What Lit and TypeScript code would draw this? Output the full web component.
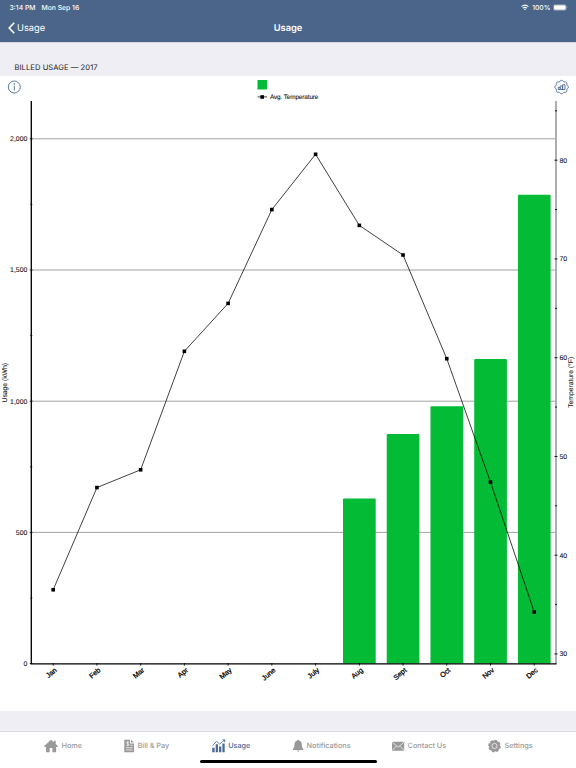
import { LitElement, html, svg, css } from "lit";
import { customElement, property } from "lit/decorators.js";

const MONTHS = ["Jan", "Feb", "Mar", "Apr", "May", "June", "July", "Aug", "Sept", "Oct", "Nov", "Dec"];
const USAGE = [0, 0, 0, 0, 0, 0, 0, 629, 875, 981, 1161, 1787];
const TEMPS = [36.5, 46.85, 48.65, 60.65, 65.5, 75, 80.6, 73.4, 70.4, 59.9, 47.4, 34.25];

// Chart coordinates are relative to the top of the white panel.
const BASE = 587.6;
const monthX = (i: number) => 53.2 + i * 43.73;
const usageY = (v: number) => BASE - v * 0.2624;
const tempY = (t: number) => 84.2 + (80 - t) * 9.875;

@customElement("usage-chart")
class UsageChart extends LitElement {
  static styles = css`
    :host { display: block; height: 635.5px; background: #fff; }
    svg { display: block; font-family: "Liberation Sans", Arial, sans-serif; text-rendering: geometricPrecision; }
    .axis { stroke: #000; stroke-width: 1.35; fill: none; }
    .right-axis { stroke: #aaa; stroke-width: 1.9; }
    .tick { stroke: #000; stroke-width: 0.9; }
    .grid { stroke: #8b8b8b; stroke-width: 0.8; }
    .bar { fill: #03bb35; }
    .line { fill: none; stroke: #000; stroke-width: 0.75; }
    .num { font-size: 6.9px; fill: #111; stroke: #111; stroke-width: 0.08; }
    .legend { font-size: 6.4px; }
    .month { font-size: 7.1px; fill: #000; stroke: #000; stroke-width: 0.25; }
    .accent { fill: none; stroke: #4a6a99; stroke-width: 0.9; }
    .gear { stroke-width: 1; }
    .dot { fill: #4a6a99; }
  `;

  private gearPath() {
    let d = "";
    for (let i = 0; i <= 80; i++) {
      const a = (i / 80) * Math.PI * 2;
      const r = 6.3 + 0.5 * Math.cos(a * 8);
      d += `${i ? "L" : "M"}${(561.6 + r * Math.cos(a)).toFixed(2)} ${(11.1 + r * Math.sin(a)).toFixed(2)}`;
    }
    return d + "Z";
  }

  render() {
    const minorUsage = [250, 750, 1250, 1750];
    const minorTemps = [35, 45, 55, 65, 75, 85];
    return html`<svg width="576" height="635" viewBox="0 0 576 635">
      <circle class="accent" cx="14.3" cy="11" r="6"></circle>
      <circle class="dot" cx="14.3" cy="8" r="0.8"></circle>
      <path class="accent" d="M14.3 9.7V14.5"></path>
      <path class="accent gear" d=${this.gearPath()}></path>
      <path class="accent" stroke-width="0.7" d="M558.2 13.5V11.5H560.2V13.5ZM560.2 13.5V10H562.6V13.5ZM562.6 13.5V8.8H565V13.5Z"></path>

      <rect class="bar" x="257.5" y="4" width="9.5" height="9.5"></rect>
      <path class="line" d="M257.6 20.9H267"></path>
      <rect x="260.4" y="19.2" width="3.6" height="3.6"></rect>
      <text class="num legend" x="270" y="23" textLength="48.4">Avg. Temperature</text>

      ${[500, 1000, 1500, 2000].map((v) => svg`<path class="grid" d=${`M31 ${usageY(v)}H556`}></path>`)}
      ${USAGE.map((v, i) => v
        ? svg`<path class="bar" d=${`M${monthX(i) - 16.3} ${BASE}V${usageY(v) + 1}q0 -1 1 -1h30.7q1 0 1 1V${BASE}Z`}></path>`
        : null)}
      <path class="axis right-axis" d="M556 25V588"></path>
      <path class="axis" d="M31.3 25V587.9H556.5"></path>

      ${[0, 500, 1000, 1500, 2000].map((v) => svg`
        <path class="tick" d=${`M29.8 ${usageY(v)}H32.5`}></path>
        <text class="num" x="27.3" y=${usageY(v) + 2.4} text-anchor="end">${v.toLocaleString("en-US")}</text>`)}
      ${minorUsage.map((v) => svg`<path class="tick" d=${`M30.3 ${usageY(v)}H32.3`}></path>`)}
      ${[30, 40, 50, 60, 70, 80].map((v) => svg`
        <path class="tick" d=${`M554.5 ${tempY(v)}H557.5`}></path>
        <text class="num" x="559.5" y=${tempY(v) + 2.4}>${v}</text>`)}
      ${minorTemps.map((v) => svg`<path class="tick" d=${`M555 ${tempY(v)}H557`}></path>`)}

      <polyline class="line" points=${TEMPS.map((t, i) => `${monthX(i)},${tempY(t)}`).join(" ")}></polyline>
      ${TEMPS.map((t, i) => svg`<rect x=${monthX(i) - 1.8} y=${tempY(t) - 1.8} width="3.6" height="3.6"></rect>`)}
      ${MONTHS.map((m, i) => svg`
        <path class="tick" d=${`M${monthX(i)} 587V589.6`}></path>
        <text class="month" text-anchor="end" transform=${`translate(${monthX(i) + 4.1} 595) rotate(-40)`}>${m}</text>`)}

      <text class="num" text-anchor="middle" transform="translate(7.2 306.7) rotate(-90)" textLength="39.5">Usage (kWh)</text>
      <text class="num" text-anchor="middle" transform="translate(572.5 306.3) rotate(-90)" textLength="51">Temperature (°F)</text>
    </svg>`;
  }
}

const ICONS: Record<string, unknown> = {
  home: svg`<path d="M7 .8L0 7.2l.7.8H2v5.2h3.7V9h2.7v4.2h3.7V8h1.3l.6-.8-2.3-2.1V1.8H9.8v1.5Z"/>`,
  bill: svg`<path d="M.3 .8H6v3.6h4v8.8H.3Z"/><path d="M7 .8l3 2.8H7Z"/>
    <path class="cut" d="M4.9 3.2C3.8 2.6 2.5 3 2.7 3.9c.2.9 2.2.7 2.2 1.8 0 .9-1.5 1.1-2.4.5M3.8 2.2v5M6.2 6.3h2.4M2 8.7h6.6M2 10.9h6.6"/>`,
  usage: svg`<path d="M.2 8.7h2.4v4.6H.2ZM3.7 5.3h2.3v8H3.7ZM7 7.4h2.3v5.9H7ZM10.4 4.5h2.3v8.8h-2.3Z"/>
    <path class="trace" d="M.5 6.7l4.1-4.4 3.1 2.8 4.1-3.6"/><path d="M10.2.4h2.9v3Z"/>`,
  bell: svg`<path d="M4.3 1.5C4.3.5 6 .5 6 1.5c2 .5 2.8 2 2.8 4.1 0 2.6.5 3.4 1.5 4.3v1H0v-1c1-.9 1.5-1.7 1.5-4.3 0-2.1.8-3.6 2.8-4.1ZM3.7 11.6h2.9c-.3 1.6-2.6 1.6-2.9 0Z"/>`,
  mail: svg`<rect y="2.7" width="12.2" height="9" rx=".5"/><path class="cut" d="M.4 3.4l5.7 4.8 5.7-4.8M.4 11.1l4-4M11.8 11.1l-4-4"/>`,
  gear: svg`<circle cx="6.5" cy="7" r="5.5"/><circle class="teeth" cx="6.5" cy="7" r="5.6" pathLength="80"/><circle class="cut" cx="6.5" cy="7" r="2.6"/>`,
};

@customElement("tab-item")
class TabItem extends LitElement {
  @property() icon = "home";
  @property() label = "";

  static styles = css`
    :host { display: flex; align-items: center; height: 14px; color: #999; white-space: nowrap; }
    :host([active]) { color: #4a6a99; }
    svg { flex: none; fill: currentColor; }
    .cut { fill: none; stroke: #fff; stroke-width: .7; }
    .trace { fill: none; stroke: currentColor; stroke-width: .8; }
    .teeth { fill: none; stroke: currentColor; stroke-width: 1.5; stroke-dasharray: 6 4; }
    .label { font-size: 7.3px; font-weight: 500; line-height: 14px; letter-spacing: -.03px; text-rendering: geometricPrecision; }
  `;

  render() {
    const widths: Record<string, number> = { home: 18, bill: 13.7, usage: 16.3, bell: 13.7, mail: 15.7, gear: 16.4 };
    const w = widths[this.icon];
    return html`<svg width=${w} height="14" viewBox="0 0 ${w} 14">${ICONS[this.icon]}</svg><span class="label">${this.label}</span>`;
  }
}

@customElement("app-root")
class AppRoot extends LitElement {
  static styles = css`
    :host { display: flex; flex-direction: column; width: 576px; height: 768px; overflow: hidden; background: #efeef4; font-family: Inter, Roboto, sans-serif; text-rendering: geometricPrecision; }
    .header { height: 42px; background: #4a6589; color: #fff; box-sizing: border-box; }
    .status { display: flex; align-items: center; height: 14px; padding: 0 8px 0 9.5px; font-size: 6.8px; font-weight: 500; }
    .date { margin-left: 6px; flex: 1; }
    .wifi { margin-right: 3px; }
    .battery { margin-left: 2.5px; }
    .nav { display: grid; grid-template-columns: 1fr auto 1fr; align-items: center; height: 28px; }
    .back { display: flex; align-items: center; gap: 2.5px; padding-left: 7.5px; font-size: 9.3px; }
    .title { font-size: 9.3px; font-weight: 600; }
    .section { display: flex; align-items: center; height: 33.5px; box-sizing: border-box; border-top: 1px solid #d6d6df; padding: 17px 0 0 14.5px; font-size: 7.6px; letter-spacing: .05px; line-height: 10px; color: #1c1c1e; }
    .gap { flex: 1; }
    .tabs { height: 37.5px; box-sizing: border-box; background: #fff; border-top: 1px solid #d9d8df; display: flex; flex-direction: column; align-items: center; justify-content: space-between; }
    .row { display: grid; align-self: stretch; grid-template-columns: 80.4px 88px 81px 99px 96.2px 1fr; padding: 7.2px 0 0 43.5px; }
    .indicator { width: 177px; height: 3px; border-radius: 2px; background: #000; margin-bottom: 4.8px; }
  `;

  render() {
    return html`
      <div class="header">
        <div class="status">
          <span>3:14 PM</span><span class="date">Mon Sep 16</span>
          <svg class="wifi" width="8" height="7" viewBox="0 0 8 7" fill="none" stroke="#fff" stroke-width="1.1">
            <path d="M.6 2.7Q4-.5 7.4 2.7M2 4.2q2-1.7 4 0"></path><path fill="#fff" stroke="none" d="M2.9 5.1q1.1-.9 2.2 0L4 6.3Z"></path>
          </svg>
          <span>100%</span>
          <svg class="battery" width="15" height="7" viewBox="0 0 15 7">
            <rect x=".4" y=".7" width="12.8" height="5.7" rx="1.5" fill="none" stroke="#b3bfce" stroke-width=".5"></rect>
            <rect x="1" y="1.3" width="11.6" height="4.5" rx="1" fill="#fff"></rect>
            <path d="M13.9 2.6q.9.9 0 1.8Z" fill="#b3bfce"></path>
          </svg>
        </div>
        <div class="nav">
          <div class="back">
            <svg width="7" height="12" viewBox="0 0 7 12" fill="none" stroke="#fff" stroke-width="1.6"><path d="M6.2.7L1.2 6l5 5.3"></path></svg>
            <span>Usage</span>
          </div>
          <div class="title">Usage</div>
        </div>
      </div>
      <div class="section">BILLED USAGE — 2017</div>
      <usage-chart></usage-chart>
      <div class="gap"></div>
      <div class="tabs">
        <div class="row">
          <tab-item icon="home" label="Home"></tab-item>
          <tab-item icon="bill" label="Bill &amp; Pay"></tab-item>
          <tab-item icon="usage" label="Usage" active></tab-item>
          <tab-item icon="bell" label="Notifications"></tab-item>
          <tab-item icon="mail" label="Contact Us"></tab-item>
          <tab-item icon="gear" label="Settings"></tab-item>
        </div>
        <div class="indicator"></div>
      </div>`;
  }
}
